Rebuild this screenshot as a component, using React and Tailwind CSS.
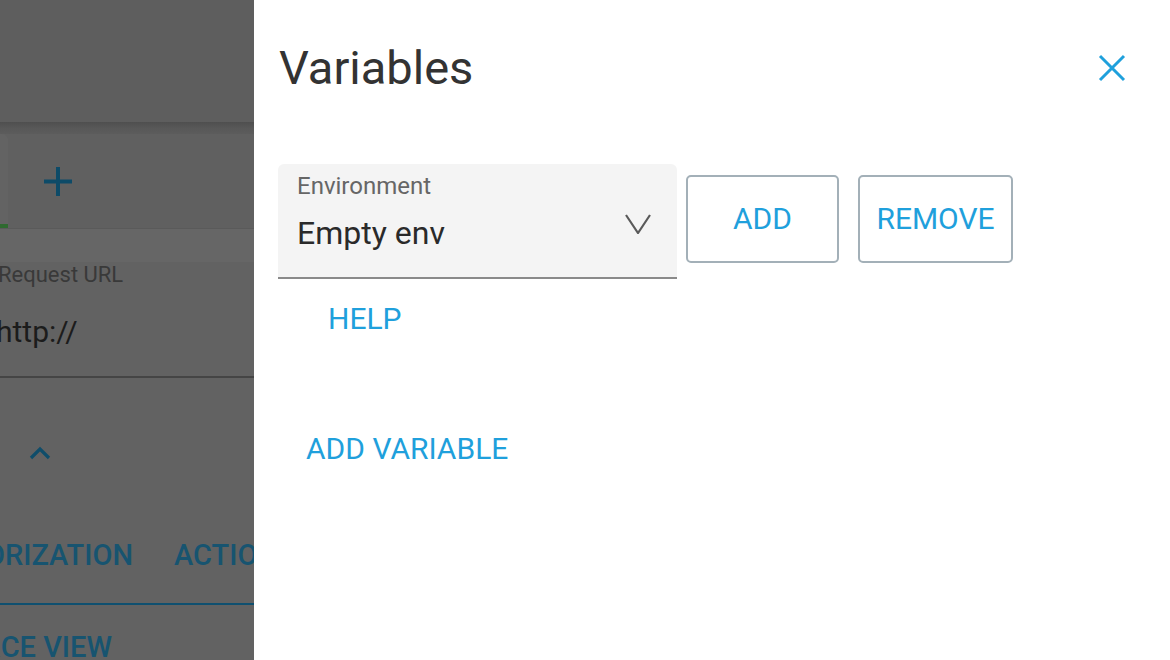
import React from "react";

const font = { fontFamily: "Roboto, 'Noto Sans', sans-serif" };

function LeftBackdrop() {
  return (
    <div className="w-[254px] h-[660px] shrink-0 overflow-hidden flex flex-col bg-[#626262]">
      <div className="h-[122px] shrink-0 bg-[#5e5e5e]" />
      <div className="h-[12px] shrink-0 bg-gradient-to-b from-[#4f4f4f] via-[#585858] to-[#5c5c5c]" />
      <div className="h-[94px] shrink-0 bg-[#606060] flex">
        <div className="w-[8px] h-full bg-[#636363] rounded-tr-[6px] flex flex-col justify-end">
          <div className="h-[4px] bg-[#2f6a30]" />
        </div>
        <div className="ml-[36px] mt-[33px]">
          <svg width="28" height="29" viewBox="0 0 28 29">
            <path d="M14 0V29M0 14.5H28" stroke="#0d4b68" strokeWidth="4" fill="none" />
          </svg>
        </div>
      </div>
      <div className="h-[1px] shrink-0 bg-[#5a5a5a]" />
      <div className="h-[33px] shrink-0 bg-[#666666]" />
      <div className="flex flex-col shrink-0">
        <div className="pt-[2px] ml-[-2px] text-[22px] leading-none text-[#393939] whitespace-nowrap" style={font}>
          Request URL
        </div>
        <div className="mt-[31px] ml-[-4px] text-[30px] leading-none text-[#1c1c1c] whitespace-nowrap" style={font}>
          http://
        </div>
        <div className="mt-[29px] h-[2px] bg-[#454545]" />
        <div className="mt-[68px] ml-[29px]">
          <svg width="22" height="14" viewBox="0 0 22 14">
            <path d="M2 12L11 3L20 12" stroke="#0f4d6a" strokeWidth="3.2" fill="none" />
          </svg>
        </div>
        <div className="mt-[81px] flex items-start text-[29px] leading-none font-medium text-[#175470] whitespace-nowrap" style={font}>
          <div className="w-[133px] flex justify-end">
            <span>AUTHORIZATION</span>
          </div>
          <div className="ml-[41px]">ACTIONS</div>
        </div>
        <div className="mt-[33px] h-[2px] bg-[#0f5070]" />
        <div className="mt-[28px] text-[29px] leading-none font-medium text-[#175470] whitespace-nowrap" style={font}>
          <div className="w-[112px] flex justify-end">
            <span>SOURCE VIEW</span>
          </div>
        </div>
      </div>
    </div>
  );
}

function Panel() {
  return (
    <div className="flex-1 h-[660px] bg-white flex flex-col pl-[24px]" style={font}>
      <div className="pt-[44px] pr-[44px] flex items-center justify-between">
        <h1 className="text-[47px] leading-none text-[#333333] ml-[1px]">Variables</h1>
        <svg width="28" height="28" viewBox="0 0 28 28">
          <path d="M2 2L26 26M26 2L2 26" stroke="#1fa0dc" strokeWidth="3" fill="none" />
        </svg>
      </div>
      <div className="mt-[73px] flex items-start">
        <div className="w-[399px] h-[115px] bg-[#f4f4f4] rounded-t-[6px] border-b-2 border-[#8a8a8a] flex pl-[19px] pr-[26px]">
          <div className="flex-1 flex flex-col">
            <div className="pt-[10px] text-[24px] leading-none text-[#666666]">Environment</div>
            <div className="mt-[19px] text-[32px] leading-none text-[#2a2a2a]">Empty env</div>
          </div>
          <div className="mt-[50px]">
            <svg width="26" height="20" viewBox="0 0 26 20">
              <path d="M1 1L13 19L25 1" stroke="#5a5a5a" strokeWidth="2.2" fill="none" />
            </svg>
          </div>
        </div>
        <button className="mt-[11px] ml-[9px] w-[153px] h-[88px] border-2 border-[#a3b0b8] rounded-[5px] text-[30px] leading-none text-[#1fa0dc] flex items-center justify-center">
          ADD
        </button>
        <button className="mt-[11px] ml-[19px] w-[155px] h-[88px] border-2 border-[#a3b0b8] rounded-[5px] text-[30px] leading-none text-[#1fa0dc] flex items-center justify-center">
          REMOVE
        </button>
      </div>
      <div className="mt-[25px] ml-[50px] text-[30px] leading-none text-[#1fa0dc]">HELP</div>
      <div className="mt-[100px] ml-[28px] text-[30px] leading-none text-[#1fa0dc]">ADD VARIABLE</div>
    </div>
  );
}

export default function App() {
  return (
    <div className="w-[1170px] h-[660px] flex overflow-hidden">
      <LeftBackdrop />
      <Panel />
    </div>
  );
}
